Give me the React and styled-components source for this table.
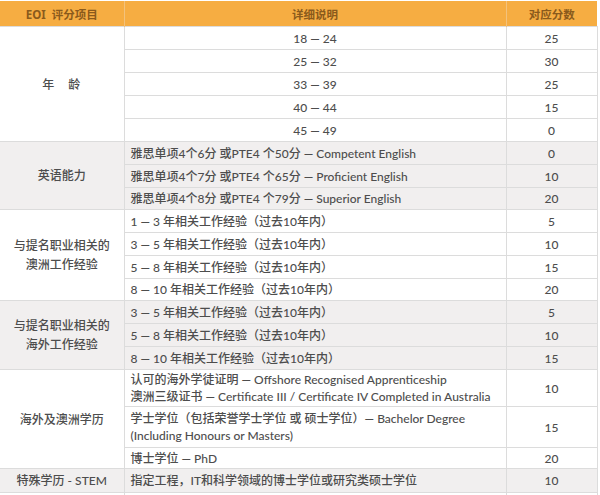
import React from "react";
import styled, { createGlobalStyle } from "styled-components";

const Global = createGlobalStyle`
  html, body { margin: 0; padding: 0; background: #fff; }
  body { font-family: "Lato", "Noto Sans CJK SC", sans-serif; }
`;

const Page = styled.div`
  width: 600px;
  height: 495px;
  overflow: hidden;
  background: #fff;
  padding-top: 1px;
  box-sizing: border-box;
`;

const Table = styled.table`
  width: 597px;
  border-collapse: collapse;
  table-layout: fixed;
  font-family: "Lato", "Noto Sans CJK SC", sans-serif;
  font-size: 12px;
  color: #4d4d4d;
`;

const HeadCell = styled.th`
  background: #f6ad42;
  color: #8a5a1c;
  font-family: "Noto Sans", "Noto Sans CJK SC", sans-serif;
  font-weight: 700;
  font-size: 11.5px;
  height: 25px;
  padding: 0;
  text-align: center;
  border-left: 1px solid #f3c27c;
  &:first-child { border-left: none; }
`;

const Row = styled.tr`
  height: ${(p) => p.$h}px;
  background: ${(p) => (p.$shade ? "#f1efef" : "#fff")};
`;

const Category = styled.td`
  border: 1px solid #dcdcdc;
  border-left: none;
  text-align: center;
  vertical-align: middle;
  font-weight: 500;
  line-height: 19px;
  padding: 0 4px;
  letter-spacing: ${(p) => p.$spaced || "0"};
`;

const Detail = styled.td`
  border: 1px solid #dcdcdc;
  padding: 0 6px;
  text-align: ${(p) => (p.$center ? "center" : "left")};
  vertical-align: middle;
  font-weight: 500;
  line-height: 17px;
  white-space: nowrap;
`;

const Score = styled.td`
  border: 1px solid #dcdcdc;
  text-align: center;
  vertical-align: middle;
  font-weight: 500;
  padding: 0;
`;

const groups = [
  {
    label: "年\u3000龄",
    spaced: "1px",
    shade: false,
    center: true,
    rows: [
      ["18 — 24", "25", 23],
      ["25 — 32", "30", 23],
      ["33 — 39", "25", 23],
      ["40 — 44", "15", 23],
      ["45 — 49", "0", 23],
    ],
  },
  {
    label: "英语能力",
    shade: true,
    rows: [
      ["雅思单项4个6分 或PTE4 个50分 — Competent English", "0", 23],
      ["雅思单项4个7分 或PTE4 个65分 — Proficient English", "10", 23],
      ["雅思单项4个8分 或PTE4 个79分 — Superior English", "20", 22],
    ],
  },
  {
    label: ["与提名职业相关的", "澳洲工作经验"],
    shade: false,
    rows: [
      ["1 — 3 年相关工作经验（过去10年内）", "5", 23],
      ["3 — 5 年相关工作经验（过去10年内）", "10", 23],
      ["5 — 8 年相关工作经验（过去10年内）", "15", 23],
      ["8 — 10 年相关工作经验（过去10年内）", "20", 22],
    ],
  },
  {
    label: ["与提名职业相关的", "海外工作经验"],
    shade: true,
    rows: [
      ["3 — 5 年相关工作经验（过去10年内）", "5", 23],
      ["5 — 8 年相关工作经验（过去10年内）", "10", 23],
      ["8 — 10 年相关工作经验（过去10年内）", "15", 23],
    ],
  },
  {
    label: "海外及澳洲学历",
    shade: false,
    rows: [
      [
        [
          "认可的海外学徒证明 — Offshore Recognised Apprenticeship",
          "澳洲三级证书 — Certificate III / Certificate IV Completed in Australia",
        ],
        "10",
        37,
      ],
      [
        ["学士学位（包括荣誉学士学位 或 硕士学位）— Bachelor Degree", "(Including Honours or Masters)"],
        "15",
        41,
      ],
      ["博士学位 — PhD", "20", 21],
    ],
  },
  {
    label: "特殊学历 - STEM",
    shade: true,
    rows: [["指定工程，IT和科学领域的博士学位或研究类硕士学位", "10", 24]],
  },
];

const Lines = ({ value }) =>
  Array.isArray(value)
    ? value.map((l, i) => (
        <React.Fragment key={i}>
          {i > 0 && <br />}
          {l}
        </React.Fragment>
      ))
    : value;

export default function App() {
  return (
    <Page>
      <Global />
      <Table>
        <colgroup>
          <col style={{ width: 124 }} />
          <col style={{ width: 382 }} />
          <col style={{ width: 91 }} />
        </colgroup>
        <thead>
          <tr>
            <HeadCell>EOI&nbsp;&nbsp;评分项目</HeadCell>
            <HeadCell>详细说明</HeadCell>
            <HeadCell>对应分数</HeadCell>
          </tr>
        </thead>
        <tbody>
          {groups.map((g, gi) =>
            g.rows.map((r, ri) => (
              <Row key={`${gi}-${ri}`} $h={r[2]} $shade={g.shade}>
                {ri === 0 && (
                  <Category rowSpan={g.rows.length} $spaced={g.spaced}>
                    <Lines value={g.label} />
                  </Category>
                )}
                <Detail $center={g.center}>
                  <Lines value={r[0]} />
                </Detail>
                <Score>{r[1]}</Score>
              </Row>
            ))
          )}
          <Row $h={10}>
            <Category />
            <Detail />
            <Score />
          </Row>
        </tbody>
      </Table>
    </Page>
  );
}
